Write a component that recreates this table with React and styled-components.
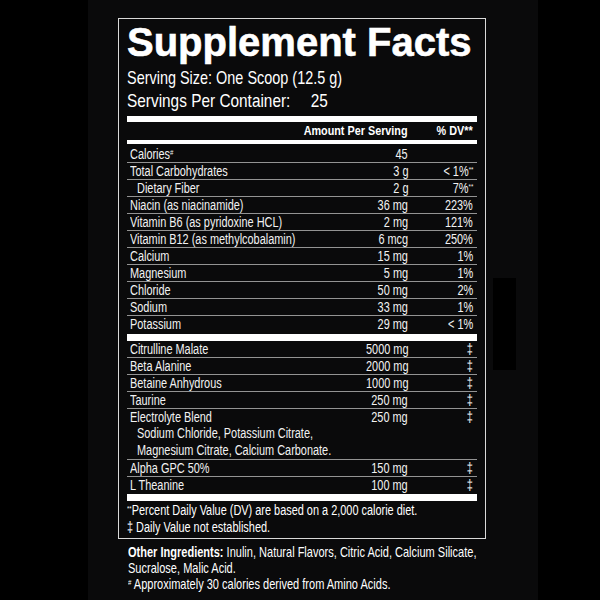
import styled, { createGlobalStyle } from "styled-components"

const GlobalStyle = createGlobalStyle`
  html, body {
    margin: 0;
    padding: 0;
    background: #000;
  }
  body {
    font-family: "Liberation Sans", Arial, sans-serif;
    color: #fff;
  }
`

const vitamins = [
  { name: "Calories", sup: "#", amount: "45", dv: "" },
  { name: "Total Carbohydrates", amount: "3 g", dv: "< 1%", dvSup: "**" },
  { name: "Dietary Fiber", amount: "2 g", dv: "7%", dvSup: "**", indent: true },
  { name: "Niacin (as niacinamide)", amount: "36 mg", dv: "223%" },
  { name: "Vitamin B6 (as pyridoxine HCL)", amount: "2 mg", dv: "121%" },
  { name: "Vitamin B12 (as methylcobalamin)", amount: "6 mcg", dv: "250%" },
  { name: "Calcium", amount: "15 mg", dv: "1%" },
  { name: "Magnesium", amount: "5 mg", dv: "1%" },
  { name: "Chloride", amount: "50 mg", dv: "2%" },
  { name: "Sodium", amount: "33 mg", dv: "1%" },
  { name: "Potassium", amount: "29 mg", dv: "< 1%" },
]

const blend = [
  { name: "Citrulline Malate", amount: "5000 mg", dv: "‡" },
  { name: "Beta Alanine", amount: "2000 mg", dv: "‡" },
  { name: "Betaine Anhydrous", amount: "1000 mg", dv: "‡" },
  { name: "Taurine", amount: "250 mg", dv: "‡" },
  {
    name: "Electrolyte Blend",
    amount: "250 mg",
    dv: "‡",
    sub: ["Sodium Chloride, Potassium Citrate,", "Magnesium Citrate, Calcium Carbonate."],
  },
  { name: "Alpha GPC 50%", amount: "150 mg", dv: "‡" },
  { name: "L Theanine", amount: "100 mg", dv: "‡" },
]

// no condensed face installed, so squeeze the regular one
const Cond = styled.span`
  display: inline-block;
  flex: none;
  white-space: pre;
  transform: scaleX(${(p) => p.$sx || 0.78});
  transform-origin: ${(p) => (p.$right ? "right" : "left")} center;
`

function FactRow({ item }) {
  return (
    <Row>
      <Name $indent={item.indent}>
        <Cond>
          {item.name}
          {item.sup && <Sup>{item.sup}</Sup>}
        </Cond>
      </Name>
      <Cell>
        <Cond $right>{item.amount}</Cond>
      </Cell>
      <Cell>
        <Cond $right>
          {item.dv}
          {item.dvSup && <Sup>{item.dvSup}</Sup>}
        </Cond>
      </Cell>
      {item.sub &&
        item.sub.map((line) => (
          <SubLine key={line}>
            <Cond>{line}</Cond>
          </SubLine>
        ))}
    </Row>
  )
}

export default function App() {
  return (
    <>
      <GlobalStyle />
      <Page>
        <Panel>
          <Label>
            <Title>Supplement Facts</Title>
            <Servings>
              <Cond $sx={0.76}>Serving Size: One Scoop (12.5 g)</Cond>
              <Cond $sx={0.81}>
                Servings Per Container:<Count>25</Count>
              </Cond>
            </Servings>
            <Bar $h={6} $top={4} />
            <HeadRow>
              <span />
              <Cell>
                <Cond $right $sx={0.79}>Amount Per Serving</Cond>
              </Cell>
              <Cell>
                <Cond $right $sx={0.79}>% DV**</Cond>
              </Cell>
            </HeadRow>
            <Bar $h={4} />
            <Section $top={2} $bottom={2}>
              {vitamins.map((item) => (
                <FactRow key={item.name} item={item} />
              ))}
            </Section>
            <Bar $h={7} />
            <Section $top={0} $bottom={1}>
              {blend.map((item) => (
                <FactRow key={item.name} item={item} />
              ))}
            </Section>
            <Bar $h={7} />
            <Notes>
              <Cond>
                <Sup>**</Sup>Percent Daily Value (DV) are based on a 2,000 calorie diet.
              </Cond>
              <Cond>‡ Daily Value not established.</Cond>
            </Notes>
          </Label>
          <Other>
            <Cond $sx={0.76}>
              <b>Other Ingredients:</b> Inulin, Natural Flavors, Citric Acid, Calcium Silicate,
            </Cond>
            <Cond $sx={0.76}>Sucralose, Malic Acid.</Cond>
            <Cond $sx={0.76}>
              <Sup>#</Sup> Approximately 30 calories derived from Amino Acids.
            </Cond>
          </Other>
        </Panel>
      </Page>
    </>
  )
}

const Page = styled.div`
  width: 600px;
  height: 600px;
  background: #000;
  overflow: hidden;
`

const Panel = styled.div`
  width: 450px;
  height: 600px;
  margin-left: 88px;
  box-sizing: border-box;
  padding: 18px 0 0 30px;
  background: linear-gradient(#000, #000) 405px 278px / 23px 92px no-repeat, #0a0a0b;
`

const Label = styled.div`
  width: 368px;
  box-sizing: border-box;
  border: 1.5px solid #d9d9d9;
  padding: 1px 8px 2px;
`

const Title = styled.h1`
  margin: 0;
  font-weight: 900;
  font-size: 40px;
  line-height: 44px;
  white-space: nowrap;
  -webkit-text-stroke: 0.6px #fff;
`

const Servings = styled.div`
  display: flex;
  flex-direction: column;
  align-items: flex-start;
  margin-top: 2px;
  font-size: 19px;
  line-height: 23px;
`

const Count = styled.span`
  margin-left: 25px;
`

const Bar = styled.div`
  height: ${(p) => p.$h}px;
  margin-top: ${(p) => p.$top || 0}px;
  background: #fff;
`

const grid = `
  display: grid;
  grid-template-columns: minmax(0, 1fr) 100px 65px;
  padding: 0 4px 0 3px;
`

const HeadRow = styled.div`
  ${grid}
  height: 18px;
  font-size: 13.7px;
  line-height: 18px;
  font-weight: 700;
`

const Cell = styled.div`
  display: flex;
  justify-content: flex-end;
  min-width: 0;
  white-space: nowrap;
`

const Section = styled.div`
  display: flex;
  flex-direction: column;
  padding: ${(p) => p.$top}px 0 ${(p) => p.$bottom}px;
`

const Row = styled.div`
  ${grid}
  font-size: 14px;
  line-height: 16px;
  color: #f2f2f2;

  & + & {
    border-top: 1px solid #939393;
  }
`

const Name = styled.div`
  display: flex;
  min-width: 0;
  padding-left: ${(p) => (p.$indent ? 7 : 0)}px;
  white-space: nowrap;
`

const SubLine = styled.div`
  grid-column: 1 / -1;
  display: flex;
  padding-left: 7px;
  line-height: 17px;
`

const Sup = styled.sup`
  font-size: 0.55em;
  line-height: 0;
  vertical-align: 0.55em;
`

const Notes = styled.div`
  display: flex;
  flex-direction: column;
  align-items: flex-start;
  padding-top: 1px;
  font-size: 14px;
  line-height: 17px;
`

const Other = styled.div`
  display: flex;
  flex-direction: column;
  align-items: flex-start;
  padding: 5px 0 0 10px;
  font-size: 14.5px;
  line-height: 16px;

  b {
    font-weight: 700;
  }
`
